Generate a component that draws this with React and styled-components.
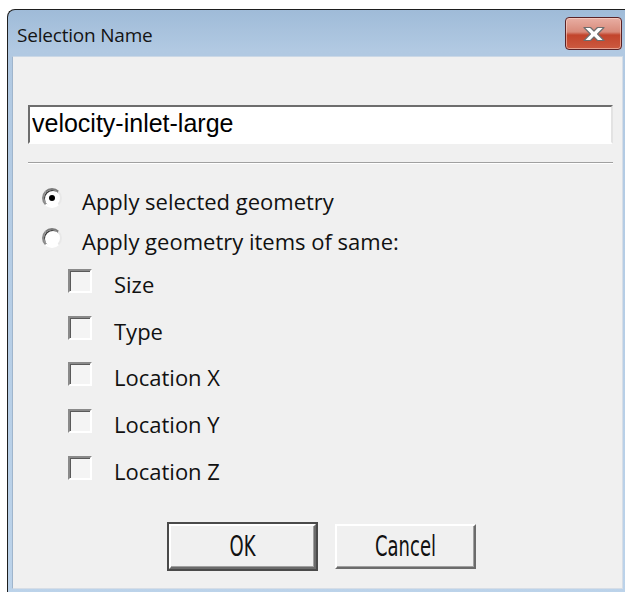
import React from "react";
import styled, { createGlobalStyle } from "styled-components";

const GlobalStyle = createGlobalStyle`
  html, body { margin: 0; padding: 0; background: #ffffff; }
  body { overflow: hidden; }
`;

const Page = styled.div`
  width: 625px;
  height: 592px;
  overflow: hidden;
  padding: 9px 0 0 7px;
  box-sizing: border-box;
`;

const Window = styled.div`
  width: 618px;
  height: 600px;
  box-sizing: border-box;
  border: 1px solid #1e1e1e;
  border-right: none;
  border-bottom: none;
  border-top-left-radius: 8px;
  background: linear-gradient(#9fbbd8 0px, #b1c9e2 40px, #bcd3ea 100%);
  display: flex;
  flex-direction: column;
  padding: 0 0 0 4px;
`;

const TitleBar = styled.div`
  height: 46px;
  display: flex;
  align-items: flex-start;
  justify-content: space-between;
  padding-left: 5px;
  padding-right: 3px;
  box-sizing: border-box;
`;

const Title = styled.span`
  font-family: "Open Sans", "Noto Sans", sans-serif;
  font-size: 19px;
  color: #141414;
  letter-spacing: -0.2px;
  margin-top: 12px;
`;

const CloseButton = styled.div`
  width: 57px;
  height: 33px;
  margin-top: 7px;
  box-sizing: border-box;
  border: 1px solid #5b2226;
  border-radius: 4px;
  background: linear-gradient(#e8aea3 0%, #d88a7a 45%, #c2442c 55%, #cc5a40 100%);
  box-shadow: inset 0 0 0 1px rgba(255, 220, 210, 0.55);
  display: flex;
  align-items: center;
  justify-content: center;
`;

const Client = styled.div`
  flex: 1;
  background: #f0f0f0;
  border-top: 1px solid #cbd8e6;
  border-left: 1px solid #9fb5cc;
  display: flex;
  flex-direction: column;
  width: 611px;
  max-height: 533px;
  box-sizing: border-box;
  border-right: 1px solid #d6dde6;
  border-bottom: 1px solid #d6dde6;
  padding: 48px 0 0 15px;
`;

const NameField = styled.input`
  width: 585px;
  height: 39px;
  box-sizing: border-box;
  border: none;
  border-top: 2px solid #6d6d6d;
  border-left: 2px solid #6d6d6d;
  border-right: 2px solid #e3e3e3;
  border-bottom: 2px solid #ffffff;
  background: #ffffff;
  font-family: "Liberation Sans", Arial, sans-serif;
  font-size: 25px;
  color: #000;
  padding: 0 0 2px 2px;
  outline: none;
`;

const Separator = styled.div`
  width: 585px;
  height: 1px;
  background: #a0a0a0;
  border-bottom: 1px solid #ffffff;
  margin-top: 18px;
`;

const Options = styled.div`
  display: flex;
  flex-direction: column;
  margin-top: 17px;
  padding-left: 12px;
`;

const OptionRow = styled.label`
  display: flex;
  align-items: center;
  height: 40px;
  gap: ${(p) => p.$gap || 22}px;
  padding-left: ${(p) => p.$indent || 0}px;
  font-family: "Open Sans", "Noto Sans", sans-serif;
  font-size: 22px;
  color: #111;
`;

const CheckRow = styled(OptionRow)`
  height: 46.6px;
`;

const Radio = styled.span`
  width: 20px;
  height: 20px;
  border-radius: 50%;
  box-sizing: border-box;
  background: #fff;
  border: 2px solid;
  border-color: #7a7a7a #e8e8e8 #ffffff #8a8a8a;
  box-shadow: inset 1px 1px 0 #3c3c3c;
  display: flex;
  align-items: center;
  justify-content: center;
  margin-top: -6px;
  &::after {
    content: "";
    width: 6px;
    height: 6px;
    border-radius: 50%;
    background: ${(p) => (p.$checked ? "#000" : "transparent")};
  }
`;

const Check = styled.span`
  width: 24px;
  height: 24px;
  box-sizing: border-box;
  border-top: 2px solid #8a8a8a;
  border-left: 2px solid #8a8a8a;
  border-right: 2px solid #ffffff;
  border-bottom: 2px solid #ffffff;
  box-shadow: inset 1px 1px 0 #5a5a5a;
  background: #f4f4f4;
  margin-top: -6px;
`;

const Buttons = styled.div`
  display: flex;
  gap: 19px;
  margin-top: 30px;
  padding-left: 141px;
`;

const Button = styled.button`
  width: ${(p) => (p.$default ? 147 : 141)}px;
  height: 45px;
  box-sizing: border-box;
  background: #f0f0f0;
  border: 2px solid;
  border-color: #ffffff #6b6b6b #6b6b6b #ffffff;
  box-shadow: ${(p) =>
    p.$default ? "0 0 0 2px #4a4a4a, inset -1px -1px 0 #a0a0a0" : "inset -1px -1px 0 #a0a0a0"};
  padding: 0;
`;

const ButtonText = styled.span`
  display: inline-block;
  font-family: "DejaVu Sans", sans-serif;
  font-stretch: condensed;
  font-size: 20px;
  color: #111;
  transform: scaleY(1.4);
`;

function CloseGlyph() {
  return (
    <svg width="24" height="16" viewBox="0 0 24 16">
      <path
        d="M2 1.5 L8.5 1.5 L12 5 L15.5 1.5 L22 1.5 L15.6 8 L22 14.5 L15.5 14.5 L12 11 L8.5 14.5 L2 14.5 L8.4 8 Z"
        fill="#ffffff"
        stroke="#6e6e6e"
        strokeWidth="1.2"
        strokeLinejoin="round"
      />
    </svg>
  );
}

const checks = ["Size", "Type", "Location X", "Location Y", "Location Z"];

export default function App() {
  return (
    <>
      <GlobalStyle />
      <Page>
        <Window>
          <TitleBar>
            <Title>Selection Name</Title>
            <CloseButton>
              <CloseGlyph />
            </CloseButton>
          </TitleBar>
          <Client>
            <NameField defaultValue="velocity-inlet-large" />
            <Separator />
            <Options>
              <OptionRow $indent={2} $gap={20}>
                <Radio $checked />
                Apply selected geometry
              </OptionRow>
              <OptionRow $indent={2} $gap={20}>
                <Radio />
                Apply geometry items of same:
              </OptionRow>
              {checks.map((c) => (
                <CheckRow key={c} $indent={28}>
                  <Check />
                  {c}
                </CheckRow>
              ))}
            </Options>
            <Buttons>
              <Button $default>
                <ButtonText>OK</ButtonText>
              </Button>
              <Button>
                <ButtonText>Cancel</ButtonText>
              </Button>
            </Buttons>
          </Client>
        </Window>
      </Page>
    </>
  );
}
